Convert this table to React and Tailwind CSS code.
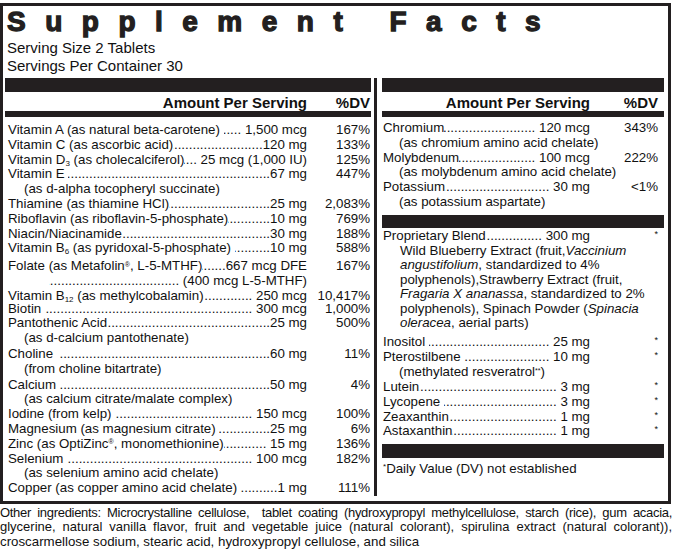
const DOTS = ".".repeat(160);

function Line({ name, amt, dv, w, dw, extra = "" }) {
  return (
    <div className={`flex ${extra}`}>
      <div className={`flex ${w}`}>
        <span className="whitespace-pre">{name}</span>
        <span className="flex-1 overflow-hidden whitespace-nowrap [direction:rtl]">{DOTS}</span>
        <span className="whitespace-pre">{amt}</span>
      </div>
      <div className={`${dw} text-right`}>{dv}</div>
    </div>
  );
}

function Note({ children, extra = "" }) {
  return <div className={`pl-[16px] whitespace-nowrap ${extra}`}>{children}</div>;
}

function Star() {
  return <span className="relative -top-[3px] pr-[4px] text-[9px] leading-[0]">*</span>;
}

const Sub = ({ children }) => <sub className="text-[8px]">{children}</sub>;
const Reg = () => <sup className="text-[7px]">®</sup>;

function Header({ w, dw }) {
  return (
    <div className="flex text-[15px] font-bold leading-[15px] mt-[3px]">
      <div className={`${w} text-right`}>Amount Per Serving</div>
      <div className={`${dw} text-right`}>%DV</div>
    </div>
  );
}

export default function App() {
  const L = { w: "w-[299px]", dw: "w-[63px]" };
  const R = { w: "w-[207px]", dw: "w-[68px]" };
  return (
    <div className="w-[675px] h-[559px] bg-white text-[#111] font-['Liberation_Sans',Arial,sans-serif]">
      <div className="mt-[3px] w-[671px] border-[3px] border-[#231f20] pt-[2px] pb-[5px]">
        <div className="pl-[4px] text-[28px] leading-[28px] font-bold tracking-[19.5px] whitespace-pre text-[#231f20] [-webkit-text-stroke:1.3px_#231f20]">
          Supplement Facts
        </div>
        <div className="pl-[4px] mt-[3px] text-[15px] leading-[18px]">
          <div>Serving Size 2 Tablets</div>
          <div>Servings Per Container 30</div>
        </div>

        <div className="flex mt-[3px]">
          {/* left column */}
          <div className="ml-[2px] w-[366px] text-[13.3px] leading-[14.8px]">
            <div className="h-[14px] bg-[#231f20]" />
            <div className="pl-[3px] pr-[1px]">
              <Header {...L} />
            </div>
            <div className="h-[6px] bg-[#231f20] mt-[1px]" />
            <div className="pl-[3px] pr-[1px] mt-[6px]">
              <Line {...L} name="Vitamin A (as natural beta-carotene) " amt=" 1,500 mcg" dv="167%" />
              <Line {...L} name="Vitamin C (as ascorbic acid)" amt="120 mg" dv="133%" />
              <Line {...L} name={<>Vitamin D<Sub>3</Sub> (as cholecalciferol)</>} amt=" 25 mcg (1,000 IU)" dv="125%" />
              <Line {...L} name="Vitamin E " amt="67 mg" dv="447%" />
              <Note>(as d-alpha tocopheryl succinate)</Note>
              <Line {...L} name="Thiamine (as thiamine HCl)" amt="25 mg" dv="2,083%" />
              <Line {...L} name="Riboflavin (as riboflavin-5-phosphate)" amt="10 mg" dv="769%" />
              <Line {...L} name="Niacin/Niacinamide" amt="30 mg" dv="188%" />
              <Line {...L} name={<>Vitamin B<Sub>6</Sub> (as pyridoxal-5-phosphate) </>} amt="10 mg" dv="588%" />
              <Line {...L} extra="mt-[3px]" name={<>Folate (as Metafolin<Reg />, L-5-MTHF)</>} amt="667 mcg DFE" dv="167%" />
              <Line {...L} name="           " amt=" (400 mcg L-5-MTHF)" dv="" />
              <Line {...L} name={<>Vitamin B<Sub>12</Sub> (as methylcobalamin)</>} amt=" 250 mcg" dv="10,417%" />
              <Line {...L} extra="-mt-[2px]" name="Biotin " amt=" 300 mcg" dv="1,000%" />
              <Line {...L} name="Pantothenic Acid" amt="25 mg" dv="500%" />
              <Note>(as d-calcium pantothenate)</Note>
              <Line {...L} extra="mt-[1px]" name="Choline  " amt="60 mg" dv="11%" />
              <Note>(from choline bitartrate)</Note>
              <Line {...L} extra="mt-[1px]" name="Calcium " amt="50 mg" dv="4%" />
              <Note>(as calcium citrate/malate complex)</Note>
              <Line {...L} name="Iodine (from kelp) " amt=" 150 mcg" dv="100%" />
              <Line {...L} name="Magnesium (as magnesium citrate) " amt="25 mg" dv="6%" />
              <Line {...L} name={<>Zinc (as OptiZinc<Reg />, monomethionine)</>} amt=" 15 mg" dv="136%" />
              <Line {...L} name="Selenium " amt=" 100 mcg" dv="182%" />
              <Note>(as selenium amino acid chelate)</Note>
              <Line {...L} name="Copper (as copper amino acid chelate) " amt="1 mg" dv="111%" />
            </div>
          </div>

          {/* divider */}
          <div className="ml-[3px] w-[3px] bg-[#231f20]" />

          {/* right column */}
          <div className="ml-[5px] w-[282px] text-[13.3px] leading-[14.8px]">
            <div className="h-[14px] bg-[#231f20]" />
            <div className="pl-[1px] pr-[6px]">
              <Header {...R} />
            </div>
            <div className="h-[6px] bg-[#231f20] mt-[1px]" />
            <div className="pl-[1px] pr-[6px] mt-[4px]">
              <Line {...R} name="Chromium" amt=" 120 mcg" dv="343%" />
              <Note>(as chromium amino acid chelate)</Note>
              <Line {...R} name="Molybdenum" amt=" 100 mcg" dv="222%" />
              <Note>(as molybdenum amino acid chelate)</Note>
              <Line {...R} name="Potassium" amt=" 30 mg" dv="<1%" />
              <Note>(as potassium aspartate)</Note>
            </div>
            <div className="h-[13px] bg-[#231f20] mt-[5px]" />
            <div className="pl-[1px] pr-[2px]">
              <Line {...R} dw="w-[72px]" extra="mt-[1px]" name="Proprietary Blend" amt=" 300 mg" dv={<Star />} />
              <div className="pl-[17px] whitespace-nowrap leading-[14.5px]">
                Wild Blueberry Extract (fruit,<i>Vaccinium</i>
                <br />
                <i>angustifolium</i>, standardized to 4%
                <br />
                polyphenols),Strawberry Extract (fruit,
                <br />
                <i>Fragaria X ananassa</i>, standardized to 2%
                <br />
                polyphenols), Spinach Powder (<i>Spinacia</i>
                <br />
                <i>oleracea</i>, aerial parts)
              </div>
              <Line {...R} dw="w-[72px]" extra="mt-[4px]" name="Inositol " amt=" 25 mg" dv={<Star />} />
              <Line {...R} dw="w-[72px]" extra="mt-[1px]" name="Pterostilbene " amt=" 10 mg" dv={<Star />} />
              <Note>
                (methylated resveratrol<sup className="text-[7px]">**</sup>)
              </Note>
              <Line {...R} dw="w-[72px]" name="Lutein" amt=" 3 mg" dv={<Star />} />
              <Line {...R} dw="w-[72px]" name="Lycopene " amt=" 3 mg" dv={<Star />} />
              <Line {...R} dw="w-[72px]" name="Zeaxanthin" amt=" 1 mg" dv={<Star />} />
              <Line {...R} dw="w-[72px]" name="Astaxanthin" amt=" 1 mg" dv={<Star />} />
            </div>
            <div className="h-[14px] bg-[#231f20] mt-[5px]" />
            <div className="pl-[1px] mt-[4px]">
              <sup className="text-[8px]">*</sup>Daily Value (DV) not established
            </div>
          </div>
        </div>
      </div>

      <div className="mt-[2px] pr-[3px] text-[13px] leading-[14.5px]">
        <div className="text-justify [text-align-last:justify] whitespace-nowrap tracking-[-0.3px]">
          Other ingredients: Microcrystalline cellulose,&nbsp; tablet coating (hydroxypropyl methylcellulose, starch (rice), gum acacia,
        </div>
        <div className="text-justify [text-align-last:justify] whitespace-nowrap">
          glycerine, natural vanilla flavor, fruit and vegetable juice (natural colorant), spirulina extract (natural colorant)),
        </div>
        <div className="text-[13.3px]">croscarmellose sodium, stearic acid, hydroxypropyl cellulose, and silica</div>
      </div>
    </div>
  );
}
